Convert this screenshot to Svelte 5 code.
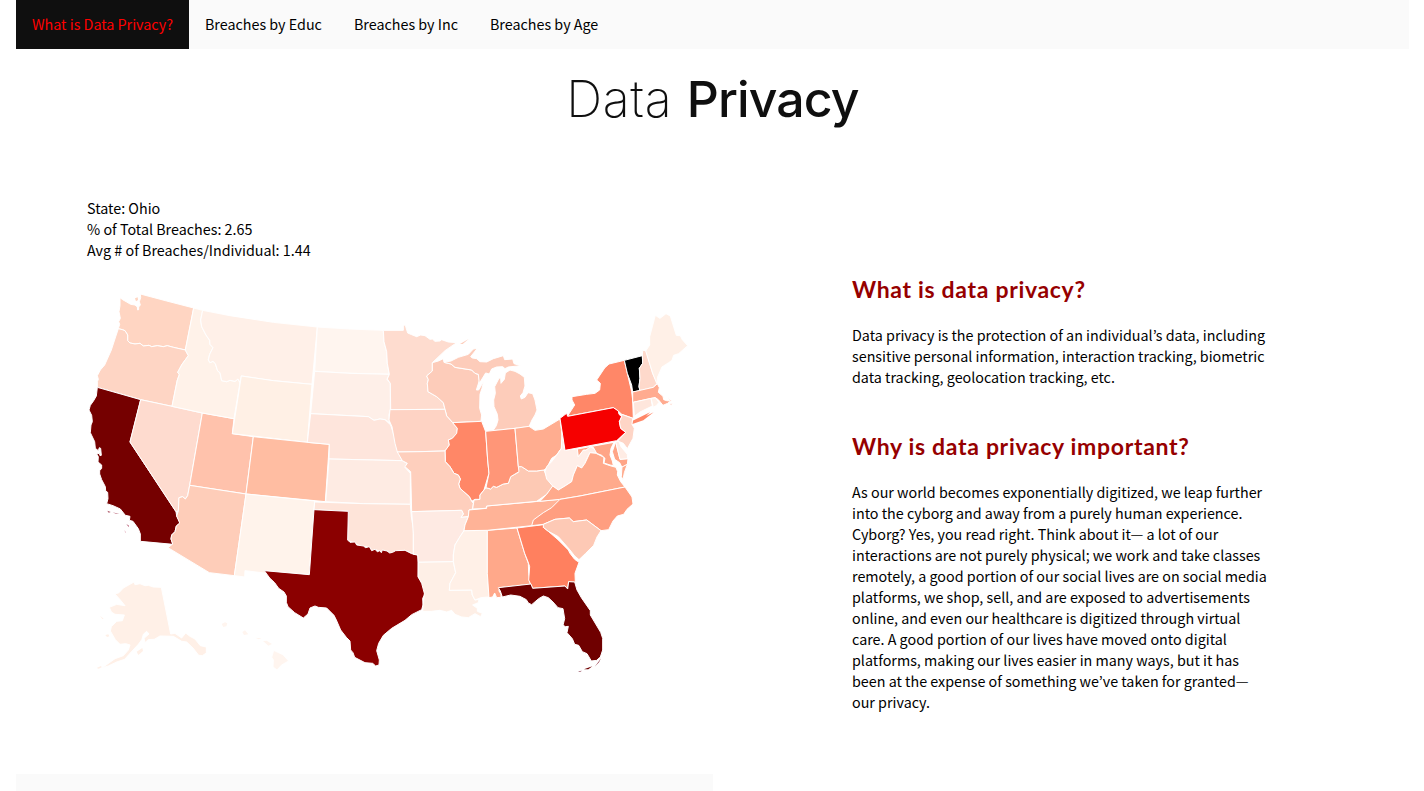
<script>
  const tabs = ['What is Data Privacy?', 'Breaches by Educ', 'Breaches by Inc', 'Breaches by Age'];

  // Small islands are drawn without the white border line.
  const islets = ['San Juan', 'Channel Islands', 'Santa Rosa', 'Catalina', 'San Clemente', 'Florida Keys', 'Key West', 'Dry Tortugas', 'Kodiak', 'Nunivak', 'Aleutians', 'St Lawrence', 'Kauai', 'Oahu', 'Molokai', 'Maui', 'Long Island', 'Isle Royale'];

  // Each region holds its own origin; outlines use thirds of a pixel from that origin.
  const regions = [
    { x: 80, y: 285, states: [
      ['Washington', '#ffd5c2', '120,38 128,44 140,51 152,58 165,60 172,66 173,75 176,74 176,66 181,60 178,50 182,38 181,27 260,48 341,69 331,120 316,195 280,187 262,182 250,185 232,182 215,185 207,181 190,183 180,175 165,177 150,174 143,167 143,150 135,137 127,134 115,131 119,118 116,110 121,100 117,80 120,62'],
      ['San Juan', '#ffd5c2', '165,40 173,37 174,45 168,49'],
      ['Oregon', '#fed5c4', '115,131 127,134 135,137 143,150 143,167 150,174 165,177 180,175 190,183 207,181 215,185 232,182 250,185 262,182 280,187 316,195 325,212 306,238 293,262 298,269 292,285 276,364 182,344 52,307 52,290 55,283 52,272 61,255 74,240 94,195 107,155'],
      ['California', '#750000', '52,307 182,344 150,471 288,680 290,693 301,714 289,723 285,740 275,750 273,762 279,778 181,769 181,747 175,731 159,709 148,706 150,694 136,691 121,672 99,662 80,656 84,641 83,622 77,618 76,605 65,584 59,567 59,557 65,550 65,540 54,531 55,515 50,507 58,505 60,512 64,511 62,490 58,488 55,497 46,490 44,470 31,443 33,420 37,410 35,391 27,375 31,361 41,347 49,333'],
      ['Channel Islands', '#a84a5c', '82,677 92,681 86,683'],
      ['Santa Rosa', '#c98a98', '98,682 118,687 108,687'],
      ['Catalina', '#b0506a', '139,717 147,722 146,726'],
      ['San Clemente', '#d898a8', '134,735 138,744 135,742'],
      ['Nevada', '#fedbcf', '182,344 276,364 367,384 329,601 323,632 316,642 308,635 297,638 295,678 288,680 150,471'],
      ['Utah', '#ffc2ac', '367,384 462,401 457,446 520,455 498,627 329,601'],
      ['Arizona', '#fecdb9', '329,601 498,627 463,872 388,863 264,788 278,777 273,762 275,750 285,740 289,723 299,714 290,693 295,678 297,638 308,635 316,642 323,632'],
      ['Idaho', '#fff2e9', '341,69 368,76 362,105 365,125 378,150 389,166 390,178 399,188 389,208 385,225 390,233 399,229 406,236 413,258 420,263 425,287 440,290 450,286 465,289 474,282 480,293 462,401 367,384 276,364 292,285 298,269 293,262 306,238 325,212 316,195'],
      ['Montana', '#fff0e8', '368,76 450,92 580,112 712,126 696,298 580,287 484,273 480,293 474,282 465,289 450,286 440,290 425,287 420,263 413,258 406,236 399,229 390,233 385,225 389,208 399,188 390,178 389,166 378,150 365,125 362,105'],
      ['Wyoming', '#fff0e5', '484,273 580,287 696,298 682,472 457,446'],
      ['Colorado', '#ffbda2', '520,455 682,472 748,478 736,650 498,627'],
      ['New Mexico', '#fff3eb', '498,627 704,648 702,675 688,869 558,859 560,865 495,857 494,876 463,872']
    ]},
    { x: 230, y: 300, states: [
      ['North Dakota', '#fff5ef', '262,81 360,87 460,91 462,125 470,155 472,190 478,223 360,220 254,214'],
      ['South Dakota', '#feefe8', '254,214 360,220 478,223 471,238 481,250 481,328 477,345 479,368 465,359 450,357 432,361 415,350 242,341'],
      ['Nebraska', '#fee5dc', '242,341 415,350 432,361 450,357 465,359 482,375 490,400 498,420 500,440 505,457 517,482 297,477 298,433 232,427']
    ]},
    { x: 230, y: 430, states: [
      ['Kansas', '#feebe3', '297,87 517,92 532,100 525,112 541,130 541,223 400,221 287,215'],
      ['Oklahoma', '#fee4d9', '254,216 400,221 541,223 544,260 550,295 550,373 525,361 500,365 482,369 465,362 458,368 435,358 428,363 410,350 395,350 375,340 352,330 354,244 252,240']
    ]},
    { x: 255, y: 500, states: [
      ['Texas', '#8b0000', '177,29 280,34 278,120 285,127 300,126 305,135 325,138 332,143 343,140 350,152 360,148 367,155 375,152 379,158 382,150 396,153 404,159 413,157 422,152 450,151 470,161 489,165 490,232 499,243 510,270 509,284 503,295 504,315 500,329 470,344 450,361 410,385 385,406 371,430 365,452 373,480 372,495 362,498 353,490 330,488 299,472 294,458 287,450 285,423 274,412 257,390 244,360 237,346 215,324 190,322 180,318 165,324 159,342 145,354 119,338 99,320 94,307 94,288 87,276 71,265 59,248 44,234 28,212 163,224']
    ]},
    { x: 380, y: 315, states: [
      ['Minnesota', '#fedccf', '10,46 70,46 70,30 76,31 83,54 95,59 110,65 122,60 135,62 150,73 157,72 165,79 180,78 185,74 205,81 230,83 195,107 157,143 157,168 140,183 145,194 142,205 144,230 170,245 190,263 195,283 32,284 31,205 22,192 28,178 22,145 20,110 12,80'],
      ['Wisconsin', '#fdccba', '157,143 175,138 190,131 192,142 213,147 225,157 275,165 285,175 295,178 298,197 289,225 296,225 311,199 306,220 300,238 299,280 305,300 303,319 218,323 200,303 195,283 190,263 170,245 144,230 142,205 145,194 140,183 157,168'],
      ['Upper Michigan', '#fdccba', '192,142 213,138 235,127 265,118 280,102 292,100 272,125 277,129 290,131 300,140 320,141 340,131 370,122 374,134 398,132 402,146 422,152 385,156 375,161 368,155 350,156 335,162 328,177 317,174 298,205 295,178 285,175 275,165 225,157 213,147'],
      ['Isle Royale', '#fdccba', '240,87 266,72 248,87'],
      ['Lower Michigan', '#fdccba', '339,347 349,332 354,315 352,298 342,275 341,255 346,235 344,215 357,190 362,188 363,205 373,193 376,174 390,165 405,169 420,177 433,187 435,213 429,233 421,243 424,252 435,247 444,233 458,236 465,255 471,285 465,300 456,315 447,335 405,340'],
      ['Iowa', '#fed3c4', '30,284 195,283 200,303 218,323 232,340 230,355 217,370 205,375 208,390 195,408 120,410 52,411 45,385 36,335 27,315']
    ]},
    { x: 400, y: 440, states: [
      ['Illinois', '#ff8767', '158,-52 245,-56 257,-25 263,60 267,100 258,130 252,150 240,165 240,178 225,178 215,184 208,170 180,145 176,132 181,117 175,105 162,100 150,80 136,65 135,33 148,15 145,0 157,-5 170,-20 172,-35'],
      ['Missouri', '#fecfbd', '-8,36 60,35 135,33 136,65 150,80 162,100 175,105 181,117 176,132 180,145 208,170 215,184 220,190 218,207 207,210 205,230 183,232 190,222 185,211 35,215 32,95 15,80 22,70 7,62'],
      ['Arkansas', '#feeae3', '35,215 185,211 190,222 183,232 205,230 195,255 192,272 180,290 165,315 160,345 160,365 55,367 53,345 40,343 40,280'],
      ['Louisiana', '#feefe6', '55,367 160,365 167,398 150,430 148,451 215,450 217,465 225,480 237,478 235,488 218,495 232,505 232,514 247,520 242,530 225,521 205,533 185,531 165,523 155,511 140,516 120,511 95,514 68,514 70,490 73,460 65,430 54,410'],
      ['Mississippi', '#fff0e7', '192,272 262,271 262,400 267,471 243,473 225,480 217,465 215,450 148,451 150,430 167,398 160,365 160,345 165,315 180,290'],
      ['Alabama', '#ffa88a', '262,271 351,264 374,340 385,370 386,400 391,433 298,443 297,453 303,462 303,472 290,473 284,459 278,471 267,473 262,400'],
      ['Tennessee', '#ffb397', '207,210 260,205 260,198 350,190 480,178 475,190 455,207 445,213 430,232 410,240 396,257 262,271 192,272 195,255 205,230'],
      ['Kentucky', '#fdc9b4', '218,207 222,180 240,178 240,165 252,150 258,143 272,147 280,139 290,142 310,132 325,130 332,110 355,97 355,80 365,80 385,93 410,93 432,90 440,110 460,138 440,163 410,184 260,198 258,205'],
      ['Indiana', '#ff9678', '257,-26 345,-35 355,80 357,95 332,110 325,130 310,132 290,142 280,139 272,147 258,143 267,100 263,60'],
      ['Ohio', '#ffad90', '345,-35 387,-41 405,-29 430,-33 480,-63 488,-5 484,25 470,45 455,55 440,84 432,90 410,93 385,93 365,80 355,80']
    ]},
    { x: 480, y: 510, states: [
      ['Georgia', '#ff805f', '111,54 198,43 190,52 205,64 235,90 265,120 270,130 284,148 297,157 285,190 286,217 266,215 263,235 255,228 158,235 146,210 149,170 144,155 134,130'],
      ['Florida', '#6f0000', '55,233 153,222 158,235 255,228 263,237 266,215 284,216 291,240 304,263 331,302 331,315 362,367 368,385 368,420 361,441 350,451 334,453 321,431 307,425 296,406 284,403 277,386 261,368 265,349 257,350 249,346 254,326 249,296 234,293 219,276 205,263 190,258 176,266 155,284 145,279 139,269 120,259 92,255 67,261 61,243'],
      ['Florida Keys', '#8f3040', '363,445 357,457 344,470 355,456'],
      ['Key West', '#6f0000', '337,469 325,478 312,478'],
      ['Dry Tortugas', '#a06070', '294,484 306,482 300,486']
    ]},
    { x: 530, y: 430, states: [
      ['West Virginia', '#ffeee8', '96,0 104,60 142,57 145,80 160,60 168,60 182,50 200,63 198,70 180,68 170,88 165,100 155,114 142,107 130,135 125,155 105,168 85,180 68,168 50,147 45,125 50,110 65,95 80,75 94,55'],
      ['Virginia', '#ffaa8c', '30,214 50,193 68,168 85,180 105,168 125,155 130,135 142,107 155,114 165,100 180,68 198,70 222,82 220,100 240,107 258,112 263,125 262,135 272,155 285,171 150,198 90,208'],
      ['Maryland', '#ffa587', '142,57 252,37 243,55 240,75 247,93 250,107 240,105 222,99 225,85 215,76 200,70 190,52 182,50 168,60 160,60 145,80'],
      ['Delmarva', '#ffa587', '257,35 270,88 294,86 292,103 276,112 269,98 254,88 247,65'],
      ['Eastern Shore', '#ffaa8c', '276,111 292,103 283,128 279,149 274,140'],
      ['Delaware', '#ffece4', '257,35 266,33 273,50 292,73 293,86 270,88'],
      ['North Carolina', '#ff9e80', '90,208 150,198 285,171 306,201 309,222 291,238 281,253 262,258 249,273 236,299 213,302 170,270 130,275 118,264 75,268 40,283 5,287 10,270 40,248 65,233'],
      ['South Carolina', '#fdc9b5', '40,283 75,268 118,264 130,275 170,270 213,302 201,321 191,346 166,371 147,389 134,378 120,360 85,320 55,304 40,292']
    ]},
    { x: 540, y: 305, states: [
      ['New York', '#ff8768', '82,334 104,300 96,285 96,275 140,268 165,265 179,255 181,235 170,225 194,189 207,177 253,166 262,205 275,260 278,285 280,340 245,328 235,318 220,308'],
      ['Long Island', '#ff8768', '275,358 278,347 330,322 318,333 341,322 310,346'],
      ['Pennsylvania', '#f60000', '60,340 80,325 83,334 220,308 235,318 237,328 245,335 238,350 242,370 257,382 230,407 75,436'],
      ['Vermont', '#000', '253,166 307,152 308,175 298,190 300,220 297,245 300,257 278,261 275,240 262,205'],
      ['New Hampshire', '#fed9cb', '307,153 308,136 318,137 338,205 352,235 340,247 300,257 297,245 300,220 298,190 308,175'],
      ['Maine', '#fff0e7', '317,138 329,120 329,95 346,31 360,40 378,26 391,33 409,91 421,92 427,104 443,122 416,146 401,151 396,166 386,173 366,186 353,216 350,235 338,205'],
      ['Massachusetts', '#ffab90', '278,261 340,247 352,236 358,248 355,262 369,274 371,284 380,287 390,288 385,277 394,286 383,295 369,301 355,284 346,278 335,280 278,292'],
      ['Connecticut', '#fee6dc', '280,292 333,280 337,303 300,321 283,334'],
      ['Rhode Island', '#fff0e8', '333,280 346,278 357,292 350,301 340,307'],
      ['Nantucket', '#ffab90', '387,298 397,294 395,301'],
      ['New Jersey', '#fed5c6', '245,328 278,340 276,358 283,370 279,400 262,431 250,415 233,408 257,382 242,370 238,350 245,335']
    ]},
    { x: 85, y: 570, states: [
      ['Alaska', '#fff0e7', '147,36 150,44 165,41 180,47 190,46 205,51 229,52 257,192 270,190 290,204 302,189 315,199 330,207 346,227 364,231 364,249 352,257 341,256 324,234 305,216 290,214 265,199 225,198 208,208 190,209 180,218 177,205 192,192 185,184 175,193 171,208 161,222 136,249 119,268 95,276 70,288 52,293 90,266 115,257 130,240 135,225 122,221 105,223 91,209 76,183 79,170 95,154 112,152 118,135 90,133 79,126 73,112 95,103 120,107 106,90 90,72 102,68 115,54'],
      ['Kodiak', '#fff0e7', '155,245 172,234 174,243 160,255'],
      ['Nunivak', '#fff0e7', '61,195 70,193 73,199 66,201'],
      ['Aleutians', '#fff0e7', '35,294 48,288 50,292 41,296'],
      ['St Lawrence', '#fff0e7', '45,137 56,146 52,147'],
      ['Kauai', '#fff5ef', '410,162 420,157 427,160 424,169 415,171'],
      ['Oahu', '#fff5ef', '472,186 480,181 490,193 477,195'],
      ['Molokai', '#fff5ef', '511,203 530,205 521,208'],
      ['Maui', '#fff5ef', '534,213 545,212 561,222 550,227 541,219'],
      ['Hawaii', '#fff5ef', '566,241 594,254 611,273 590,285 576,300 564,291 565,270 560,262']
    ]}
  ];
</script>

<div class="page">
  <nav>
    {#each tabs as tab, i}
      <a href="#top" class:active={i === 0}>{tab}</a>
    {/each}
  </nav>

  <h1>Data <b>Privacy</b></h1>

  <main>
    <section class="chart">
      <p class="info">State: Ohio<br />% of Total Breaches: 2.65<br />Avg # of Breaches/Individual: 1.44</p>
      <svg viewBox="87 282 626 400" width="626" height="400" role="img">
        {#each regions as r}
          <g transform="translate({r.x} {r.y}) scale(0.33333)">
            {#each r.states as [name, fill, points]}
              <polygon {points} {fill} class:islet={islets.includes(name)} />
            {/each}
          </g>
        {/each}
      </svg>
    </section>

    <section class="copy">
      <h2 class="first">What is data privacy?</h2>
      <p>Data privacy is the protection of an individual’s data, including<br />sensitive personal information, interaction tracking, biometric<br />data tracking, geolocation tracking, etc.</p>
      <h2 class="second">Why is data privacy important?</h2>
      <p>As our world becomes exponentially digitized, we leap further<br />into the cyborg and away from a purely human experience.<br />Cyborg? Yes, you read right. Think about it— a lot of our<br />interactions are not purely physical; we work and take classes<br />remotely, a good portion of our social lives are on social media<br />platforms, we shop, sell, and are exposed to advertisements<br />online, and even our healthcare is digitized through virtual<br />care. A good portion of our lives have moved onto digital<br />platforms, making our lives easier in many ways, but it has<br />been at the expense of something we’ve taken for granted—<br />our privacy.</p>
    </section>
  </main>
  <div class="next"></div>
</div>

<style>
  :global(body) {
    background: #fff;
    overflow: hidden;
  }
  .page {
    box-sizing: border-box;
    height: 791px;
    padding: 0 15px 0 16px;
    overflow: hidden;
    display: flex;
    flex-direction: column;
    font: 14.32px/21px 'Noto Sans CJK KR', 'Noto Sans', sans-serif;
    color: #000;
  }
  nav {
    display: flex;
    flex: none;
    height: 49px;
    background: #fafafa;
  }
  nav a {
    padding: 13px 16px 15px;
    color: #000;
    text-decoration: none;
    white-space: nowrap;
  }
  nav a.active {
    background: #0f0f0f;
    color: #f00;
  }
  h1 {
    flex: none;
    margin: 19px 0 0;
    height: 63px;
    font: 200 50px/62px Inter, sans-serif;
    letter-spacing: 0.6px;
    text-align: center;
    color: #0f0f0f;
  }
  h1 b {
    font-weight: 500;
    letter-spacing: -0.9px;
  }
  main {
    display: grid;
    grid-template-columns: 697px 1fr;
    flex: none;
    height: 643px;
  }
  .chart {
    padding: 66px 0 0 71px;
  }
  p {
    margin: 0;
    white-space: nowrap;
  }
  svg {
    display: block;
    margin-top: 22px;
  }
  polygon {
    stroke: #fff;
    stroke-width: 3;
    stroke-linejoin: round;
  }
  .islet {
    stroke: none;
  }
  .copy {
    padding: 142px 0 0 139px;
  }
  h2 {
    margin: 0;
    height: 32px;
    font: 700 23px/32px Lato, sans-serif;
    letter-spacing: 0.68px;
    color: #960000;
    white-space: nowrap;
  }
  .first {
    margin-bottom: 19px;
  }
  .second {
    margin: 43px 0 19px;
  }
  .next {
    width: 697px;
    height: 17px;
    background: #fafafa;
  }
</style>
